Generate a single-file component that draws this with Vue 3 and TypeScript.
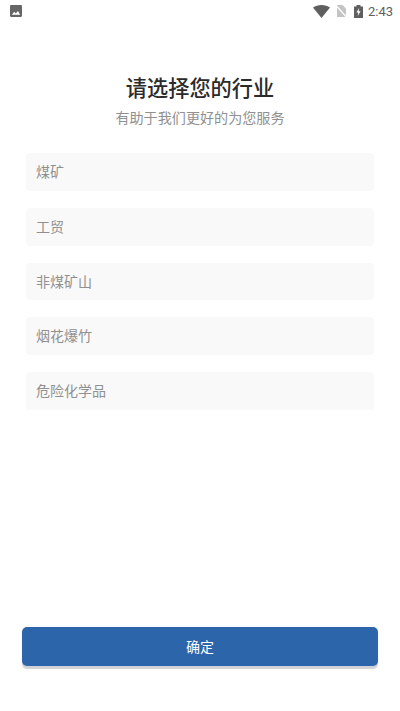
<script setup lang="ts">
const items: string[] = ['煤矿', '工贸', '非煤矿山', '烟花爆竹', '危险化学品']
</script>

<template>
  <div class="page">
    <div class="status">
      <svg class="pic" width="12" height="12" viewBox="0 0 12 12"><path d="M1.200 0h9.600C11.500 0 12 .5 12 1.200v9.600c0 .7-.5 1.200-1.200 1.200H1.200C.5 12 0 11.500 0 10.800V1.200C0 .5.500 0 1.200 0z" fill="#666"/><path d="M1.800 9.800l2.400-3 1.600 1.800 2.100-2.700 2.300 3.900z" fill="#fff"/></svg>
      <div class="right">
        <svg class="wifi" width="17" height="13" viewBox="0 0 17 13"><path d="M0 2.600C2.300.9 5.300 0 8.500 0s6.200.9 8.500 2.600L8.500 13z" fill="#5f5f5f"/></svg>
        <svg class="sim" width="10" height="12" viewBox="0 0 10 12"><path d="M1 0h5.500L10 3.500V12H1z" fill="#c4c4c4"/><path d="M0 .5l10 11" stroke="#fff" stroke-width="1.200"/></svg>
        <svg class="bat" width="9" height="13" viewBox="0 0 9 13"><path d="M2.500 0h4v1.400H9V13H0V1.400h2.500z" fill="#5f5f5f"/><path d="M5.200 3L2.400 7.600h1.900L3.700 11l2.900-4.700H4.700z" fill="#fff"/></svg>
        <span class="time">2:43</span>
      </div>
    </div>
    <h1 class="title">请选择您的行业</h1>
    <p class="sub">有助于我们更好的为您服务</p>
    <ul class="list">
      <li v-for="item in items" :key="item" class="row">{{ item }}</li>
    </ul>
    <div class="spacer"></div>
    <button class="ok" type="button">确定</button>
  </div>
</template>

<style scoped>
.page { height: 711px; display: flex; flex-direction: column; background: #fff; font-family: Roboto, "Noto Sans CJK SC", sans-serif; overflow: hidden; }
.status { height: 24px; flex: none; display: flex; align-items: center; justify-content: space-between; padding: 0 7px 0 10px; }
.pic { margin-top: -2px; }
.right { display: flex; align-items: center; margin-top: -2px; }
.sim { margin-left: 6px; }
.bat { margin-left: 8px; }
.time { font-size: 13px; color: #5f5f5f; margin-left: 5px; }
.title { margin: 52px 0 0; text-align: center; font-size: 21.2px; line-height: 26px; font-weight: 500; color: #2b2b2b; }
.sub { margin: 6px 0 0; text-align: center; font-size: 14.100px; line-height: 20px; color: #909090; }
.list { list-style: none; margin: 25px 26px 0; padding: 0; display: flex; flex-direction: column; gap: 17px; }
.row { height: 37.8px; line-height: 39.800px; background: #f9f9f9; border-radius: 4px; padding-left: 10px; font-size: 14px; color: #909090; }
.spacer { flex: 1; }
.ok { flex: none; margin: 0 22px 45px; padding: 0 0 1px; height: 39px; border: 0; border-radius: 5px; background: #2c65aa; color: #fff; font: inherit; font-size: 14px; box-shadow: 0 3px 1px rgba(40,50,70,.22); }
</style>
